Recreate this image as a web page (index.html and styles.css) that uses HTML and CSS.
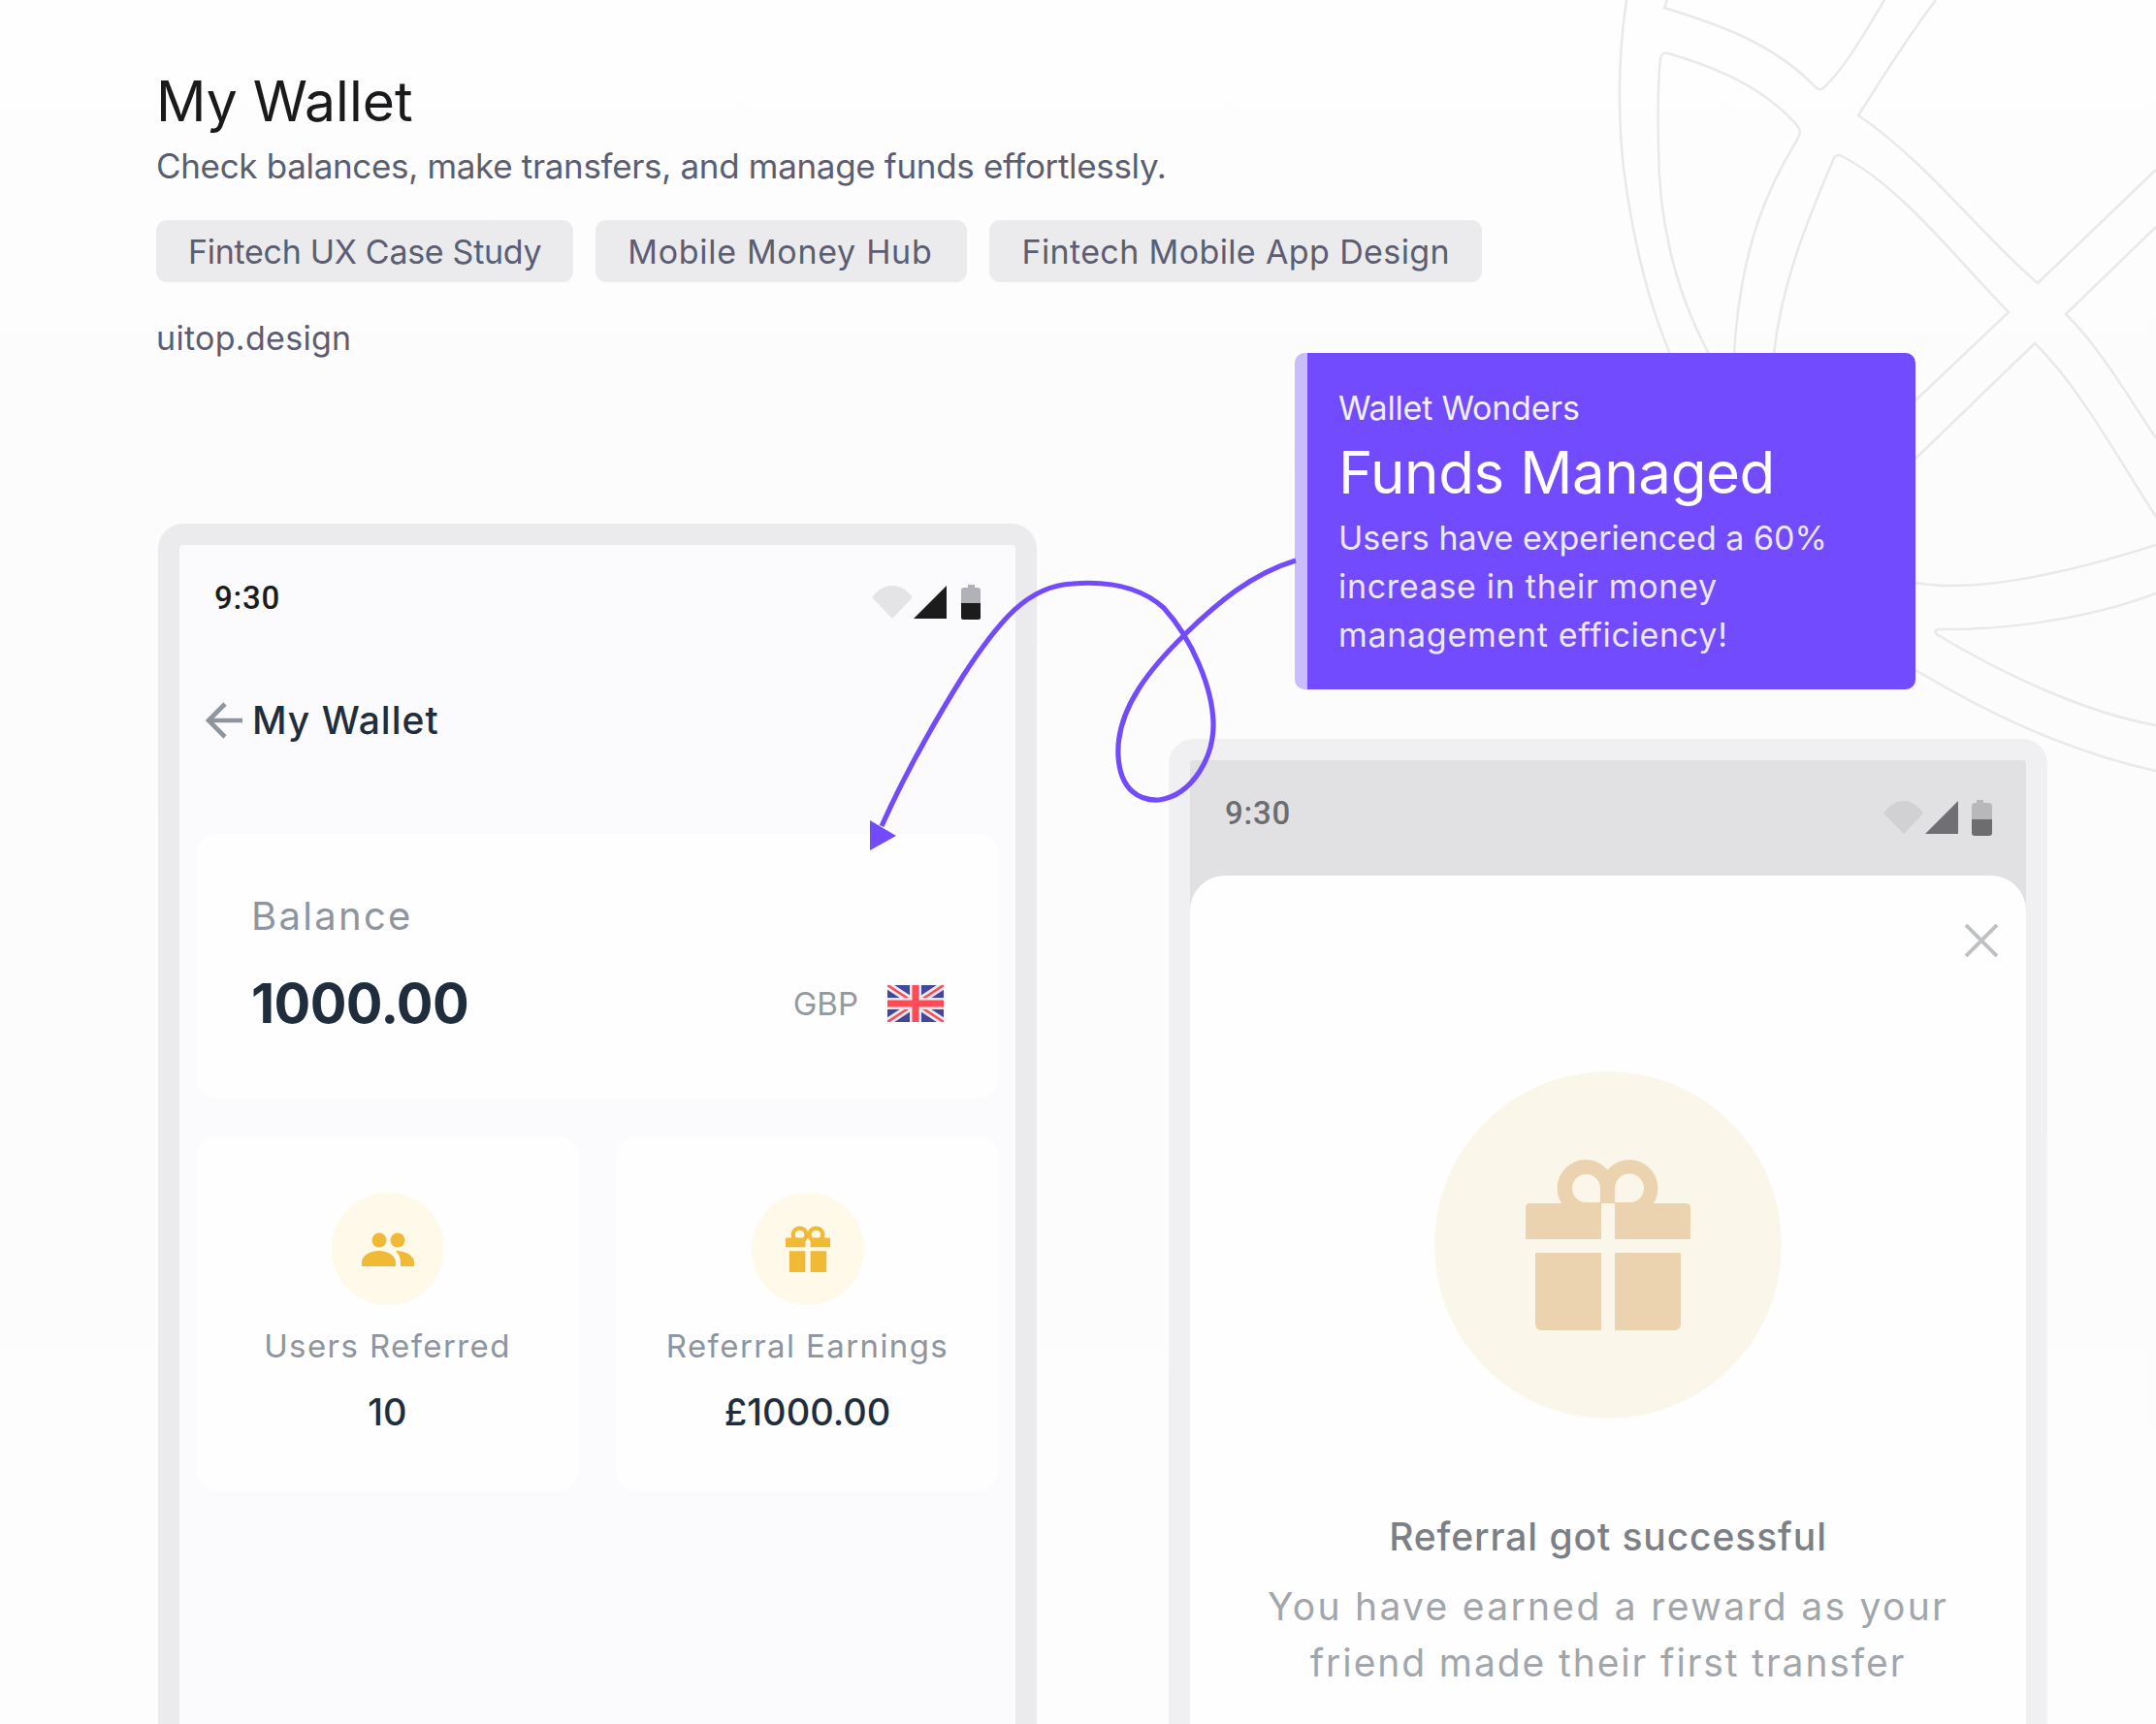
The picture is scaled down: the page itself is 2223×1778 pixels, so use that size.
FILE: index.html
```html
<!DOCTYPE html>
<html lang="en">
<head>
<meta charset="utf-8">
<title>My Wallet</title>
<link rel="stylesheet" href="styles.css">
</head>
<body>
<div class="page">
  <svg class="watermark" viewBox="0 0 2223 1778" width="2223" height="1778" fill="none" stroke="#e9e9ea" stroke-width="2.5">
    <path d="M1677 0C1668 60 1667 130 1677 195C1686 255 1700 315 1725 372"/>
    <path d="M1719 0L1716 8C1775 26 1830 46 1872 90C1875 93 1878 93 1881 90C1902 70 1922 35 1943 0"/>
    <path d="M1762 365C1730 305 1710 235 1710 150C1709 110 1710 80 1712 60C1713 55 1716 54 1720 55C1765 68 1815 88 1850 126C1857 133 1857 138 1853 144C1825 190 1795 250 1788 365"/>
    <path d="M1829 365C1837 290 1865 225 1890 165C1892 160 1895 159 1899 161C1960 192 2020 270 2071 322L1975 413"/>
    <path d="M1996 0C1965 40 1935 90 1916 119C1985 165 2045 245 2101 292L2223 175"/>
    <path d="M2223 234L2130 324C2165 358 2195 410 2223 452"/>
    <path d="M1975 473L2098 354C2145 400 2185 475 2223 533"/>
    <path d="M1975 601C2035 612 2130 592 2223 562"/>
    <path d="M2223 612C2150 640 2060 650 2000 649C1994 649 1994 653 2000 656C2065 695 2150 735 2223 748"/>
    <path d="M1975 691C2040 730 2130 775 2223 795"/>
  </svg>

  <header class="intro">
    <h1 class="intro-title">My Wallet</h1>
    <p class="intro-sub">Check balances, make transfers, and manage funds effortlessly.</p>
    <ul class="tags">
      <li class="tag">Fintech UX Case Study</li>
      <li class="tag tag-mid">Mobile Money Hub</li>
      <li class="tag tag-long">Fintech Mobile App Design</li>
    </ul>
    <p class="site">uitop.design</p>
  </header>

  <main class="stage">
    <section class="phone phone-wallet">
      <div class="status">
        <span class="clock">9:30</span>
        <span class="status-icons">
          <svg width="112" height="36" viewBox="0 0 112 36">
            <path d="M0 13C6 5 13 1 21 1C29 1 36 5 42 13L21 35Z" fill="#e4e4e6"/>
            <path d="M43 35L77 1V35Z" fill="#1c1c1c"/>
            <path d="M99 0H106V3H109Q112 3 112 6V19H92V6Q92 3 95 3H99Z" fill="#b0b2b7"/>
            <path d="M92 19H112V34Q112 36 110 36H94Q92 36 92 34Z" fill="#1c1c1c"/>
          </svg>
        </span>
      </div>
      <div class="appbar">
        <svg class="back" width="38" height="38" viewBox="0 0 38 38" fill="none" stroke="#8e959e" stroke-width="4.6">
          <path d="M38 19H3"/><path d="M20 2L3 19L20 36"/>
        </svg>
        <span class="appbar-title">My Wallet</span>
      </div>
      <div class="balance">
        <div class="balance-label">Balance</div>
        <div class="balance-row">
          <span class="balance-value">1000.00</span>
          <span class="currency">GBP</span>
          <svg class="flag" width="58" height="38" viewBox="0 0 58 38">
            <rect width="58" height="38" fill="#41479b"/>
            <path d="M0 0L58 38M58 0L0 38" stroke="#e9e9ee" stroke-width="8"/>
            <path d="M0 0L58 38M58 0L0 38" stroke="#ff4b55" stroke-width="2.6"/>
            <path d="M29 0V38M0 19H58" stroke="#e9e9ee" stroke-width="12"/>
            <path d="M29 0V38M0 19H58" stroke="#ff4b55" stroke-width="7"/>
          </svg>
        </div>
      </div>
      <div class="stats">
        <div class="stat">
          <div class="stat-icon">
            <svg width="54" height="35" viewBox="0 0 54 35" fill="#f0b936">
              <ellipse cx="18" cy="8" rx="7.5" ry="7.5"/><ellipse cx="37" cy="8" rx="7.5" ry="7.5"/>
              <path d="M0 35V31C0 24 8 19 17.500 19C27 19 35 24 35 31V35Z"/>
              <path d="M35 19C46 19 54 24 54 31V35H40V31C40 26 38 22 35 19Z"/>
            </svg>
          </div>
          <div class="stat-label">Users Referred</div>
          <div class="stat-value">10</div>
        </div>
        <div class="stat">
          <div class="stat-icon">
            <svg width="46" height="48" viewBox="0 0 120 124" fill="#f0b936">
              <path d="M0 48Q0 44 4 44H53V80H0ZM67 44H116Q120 44 120 48V80H67ZM10 94H53V174H15Q10 174 10 169ZM67 94H110V169Q110 174 105 174H67Z" transform="scale(1 .72)"/>
              <circle cx="38" cy="24" r="18" fill="none" stroke="#f0b936" stroke-width="11"/>
              <circle cx="82" cy="24" r="18" fill="none" stroke="#f0b936" stroke-width="11"/>
            </svg>
          </div>
          <div class="stat-label">Referral Earnings</div>
          <div class="stat-value">£1000.00</div>
        </div>
      </div>
    </section>

    <section class="phone phone-success">
      <div class="status status-dim">
        <span class="clock">9:30</span>
        <span class="status-icons">
          <svg width="112" height="37" viewBox="0 0 112 37">
            <path d="M0 14C6 5 13 1 21 1C29 1 35 5 41 14L21 35Z" fill="#d1d1d3"/>
            <path d="M43 35L77 1V35Z" fill="#707074"/>
            <path d="M96 0H103V3H108Q112 3 112 6V20H91V6Q91 3 95 3H96Z" fill="#b8b8bb"/>
            <path d="M91 20H112V34Q112 37 109 37H94Q91 37 91 34Z" fill="#6d6d70"/>
          </svg>
        </span>
      </div>
      <div class="sheet">
        <svg class="close" width="34" height="34" viewBox="0 0 34 34" fill="none" stroke="#c0c1c5" stroke-width="4">
          <path d="M1 1L33 33M33 1L1 33"/>
        </svg>
        <div class="reward">
          <svg width="170" height="176" viewBox="0 0 170 176" fill="#ebd3b0">
            <circle cx="62" cy="29.500" r="29.500"/>
            <circle cx="107" cy="29.500" r="29.500"/>
            <path d="M48 29.500A14.500 14.500 0 0 1 77 29.500V44H62.500A14.500 14.500 0 0 1 48 29.500ZM122 29.500A14.500 14.500 0 0 0 92 29.500V44H107.500A14.500 14.500 0 0 0 122 29.500Z" fill="#faf7ea"/>
            <rect x="78" y="45" width="14" height="15" fill="#faf7ea"/>
            <path d="M0 49Q0 45 5 45H78V82H0ZM92 45H165Q170 45 170 49V82H92ZM10 96H78V176H17Q10 176 10 169ZM92 96H160V169Q160 176 153 176H92Z"/>
          </svg>
        </div>
        <h2 class="sheet-title">Referral got successful</h2>
        <p class="sheet-text">You have earned a reward as your<span class="sheet-line">friend made their first transfer</span></p>
      </div>
    </section>
  </main>

  <aside class="callout">
    <div class="callout-kicker">Wallet Wonders</div>
    <div class="callout-title">Funds Managed</div>
    <p class="callout-text">Users have experienced a 60%<span class="callout-line">increase in their money</span><span class="callout-line">management efficiency!</span></p>
  </aside>

  <svg class="curve" viewBox="0 0 2223 1778" width="2223" height="1778" fill="none">
    <path d="M1336 578C1290 592 1255 622 1223 653C1190 685 1150 730 1153 780C1155 815 1175 826 1195 825C1230 820 1252 780 1251 745C1250 710 1230 660 1200 627C1170 600 1130 600 1106 602C1060 604 1030 640 993 697C960 750 930 805 909 852" stroke="#714bfd" stroke-width="5.200"/>
    <path d="M897 846L924 862L897 877Z" fill="#714bfd"/>
  </svg>
</div>
</body>
</html>
```
FILE: styles.css
```css
* { box-sizing: border-box; }
html, body { margin: 0; padding: 0; }
body { background: #fdfdfd; font-family: Inter, "Liberation Sans", sans-serif; }
.page {
  position: relative;
  width: 2223px;
  height: 1778px;
  overflow: hidden;
  padding: 71px 0 0 161px;
  background: linear-gradient(180deg, #fefefe 0, #fcfcfc 30%, #fdfdfd 100%);
}
.watermark, .curve { position: absolute; left: 0; top: 0; pointer-events: none; }

.intro { position: relative; height: 469px; }
.intro-title { margin: 0; font-size: 57px; line-height: 68px; font-weight: 400; letter-spacing: 0; color: #1a1a1c; white-space: nowrap; }
.intro-sub { margin: 0; font-size: 35px; line-height: 64px; color: #5b5d73; letter-spacing: -0.33px; white-space: nowrap; }
.tags { list-style: none; margin: 24px 0 0; padding: 0; display: flex; gap: 23px; }
.tag { height: 64px; padding: 0 33px; display: flex; align-items: center; border-radius: 11px; background: #ebebed; color: #5b5d73; font-size: 34px; letter-spacing: -0.3px; white-space: nowrap; }
.tag-mid { letter-spacing: 0.7px; padding-right: 36px; }
.tag-long { letter-spacing: 0.38px; }
.site { margin: 37px 0 0; font-size: 34px; line-height: 42px; color: #5b5d73; letter-spacing: 0.3px; }

.stage { display: flex; gap: 136px; padding-left: 2px; }
.phone { width: 906px; height: 1400px; flex: none; border: 22px solid #ebebed; border-radius: 26px 26px 0 0; background: #fbfbfd; }
.phone-success { margin-top: 222px; border-color: #f0f0f2; background: #e1e1e3; }

.status { height: 108px; padding: 35px 36px 0; display: flex; justify-content: space-between; align-items: flex-start; }
.status-icons { display: flex; padding-top: 6px; }
.clock { font-family: Roboto, sans-serif; font-weight: 500; font-size: 33px; line-height: 40px; color: #1c1c1c; letter-spacing: 0.8px; }
.status-dim { height: 119px; padding-left: 36px; padding-right: 35px; }
.status-dim .clock { color: #6d6d70; }

.appbar { height: 190px; display: flex; align-items: flex-start; gap: 10px; padding: 54px 0 0 27px; }
.back { flex: none; }
.appbar-title { font-size: 39px; line-height: 38px; font-weight: 500; color: #1f2d3d; letter-spacing: 1px; white-space: nowrap; }

.balance { margin: 0 17px; height: 273px; padding: 61px 57px 0 57px; border-radius: 22px; background: #fefefe; }
.balance-label { font-size: 40px; line-height: 48px; color: #8e959e; letter-spacing: 2.3px; }
.balance-row { display: flex; align-items: center; margin-top: 31px; height: 70px; }
.balance-value { font-size: 56px; font-weight: 700; letter-spacing: -0.6px; color: #1f2d3d; margin-right: auto; }
.currency { font-size: 33px; color: #949aa1; margin-right: 30px; }
.flag { flex: none; }

.stats { display: grid; grid-template-columns: 395px 395px; gap: 38px; margin: 39px 17px 0; }
.stat { height: 366px; padding-top: 58px; border-radius: 22px; background: #fefefe; display: flex; flex-direction: column; align-items: center; }
.stat-icon { width: 116px; height: 116px; border-radius: 50%; background: #fff9e9; display: flex; align-items: center; justify-content: center; }
.stat-label { margin-top: 21px; font-size: 33px; line-height: 42px; color: #8e959e; letter-spacing: 1.4px; white-space: nowrap; }
.stat-value { margin-top: 24px; font-size: 38px; line-height: 46px; font-weight: 500; color: #1f2d3d; white-space: nowrap; }

.sheet { position: relative; height: 1200px; background: #fefefe; border-radius: 36px 36px 0 0; padding-top: 202px; display: flex; flex-direction: column; align-items: center; }
.close { position: absolute; right: 29px; top: 50px; }
.reward { width: 358px; height: 358px; border-radius: 50%; background: #faf7ea; display: flex; align-items: center; justify-content: center; }
.sheet-title { margin: 98px 0 0; font-size: 39px; line-height: 48px; font-weight: 500; color: #7c8085; letter-spacing: 0.9px; white-space: nowrap; }
.sheet-text { margin: 19px 0 0; text-align: center; font-size: 39px; line-height: 58px; color: #a2a6ab; letter-spacing: 2.3px; white-space: nowrap; }
.sheet-line { display: block; letter-spacing: 1.9px; }

.callout { position: absolute; left: 1335px; top: 364px; width: 640px; height: 347px; padding: 36px 0 0 32px; background: #714bfd; border-left: 13px solid #c9bdfb; border-radius: 10px; color: #fff; }
.callout-kicker { font-size: 34px; line-height: 42px; letter-spacing: -0.2px; white-space: nowrap; color: #f2effe; }
.callout-title { margin-top: 10px; font-size: 60px; line-height: 70px; letter-spacing: -0.4px; white-space: nowrap; }
.callout-text { margin: 8px 0 0; font-size: 34px; line-height: 49.800px; letter-spacing: 0; white-space: nowrap; color: #ece7ff; }
.callout-line { display: block; letter-spacing: 0.7px; }
```
